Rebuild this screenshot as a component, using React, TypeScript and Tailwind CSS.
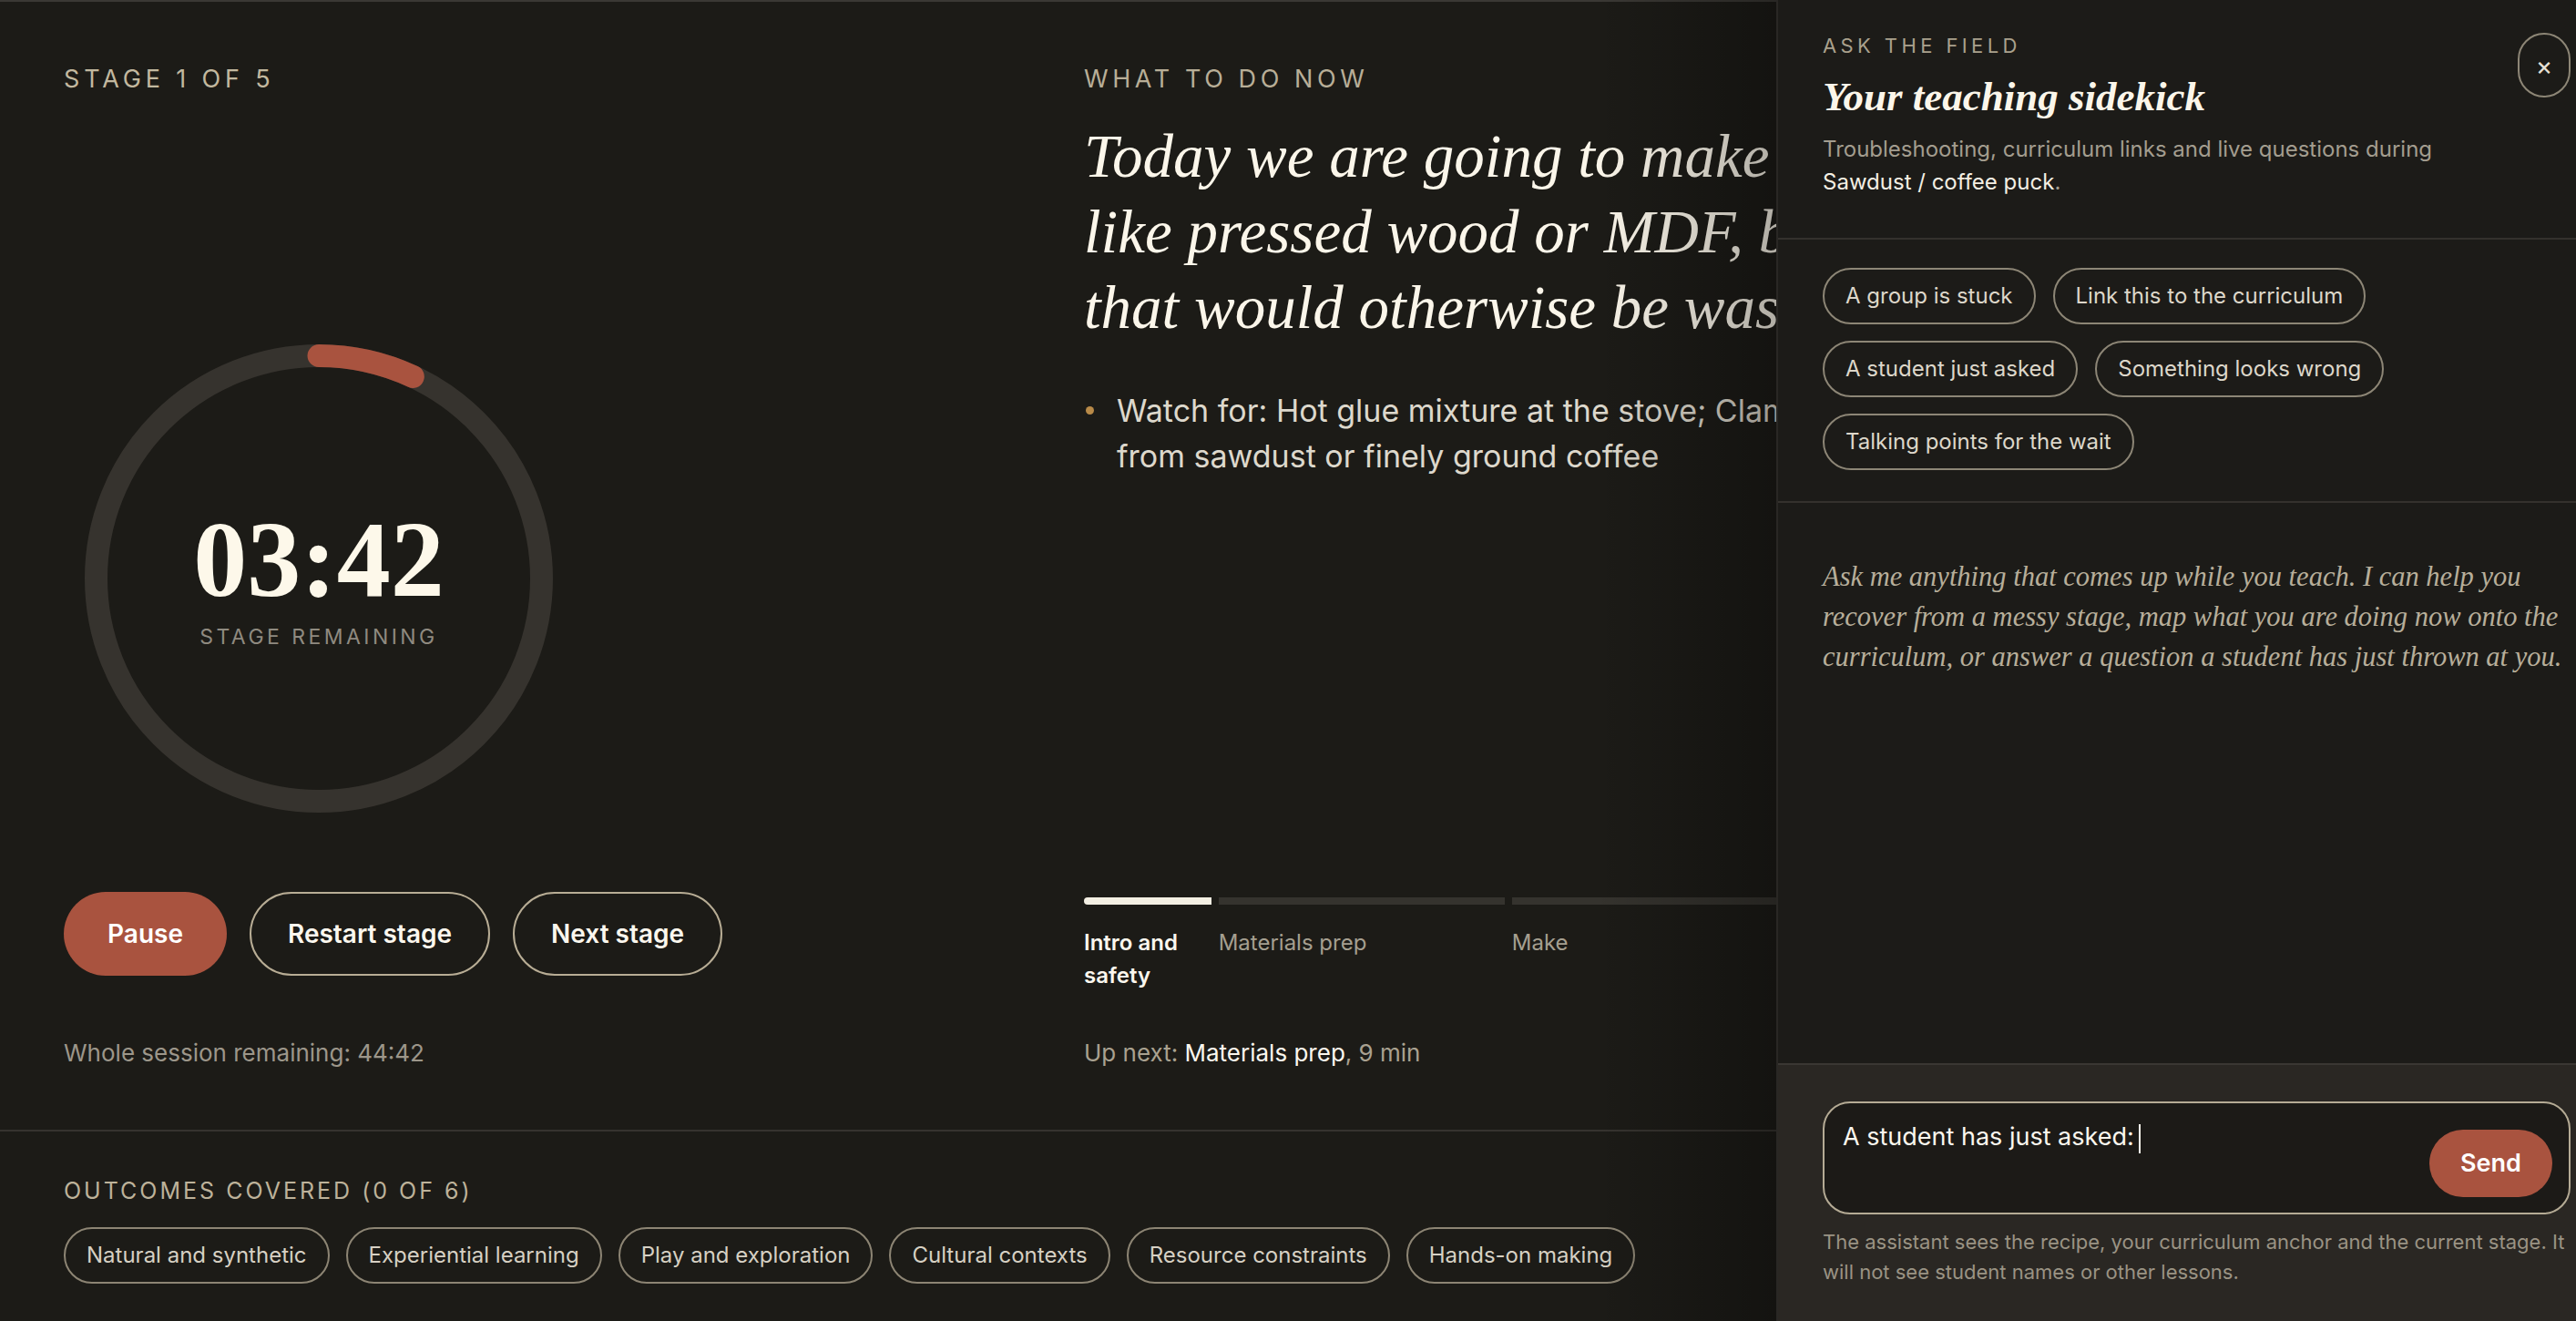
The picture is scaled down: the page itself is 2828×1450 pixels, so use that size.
import React from 'react';

interface Stage {
  name: string;
  minutes: number;
}

const stages: Stage[] = [
  { name: 'Intro and safety', minutes: 4 },
  { name: 'Materials prep', minutes: 9 },
  { name: 'Make', minutes: 16 },
  { name: 'Press and dry', minutes: 9 },
  { name: 'Reflect', minutes: 6 },
];

const outcomes = [
  'Natural and synthetic',
  'Experiential learning',
  'Play and exploration',
  'Cultural contexts',
  'Resource constraints',
  'Hands-on making',
];

const prompts = [
  'A group is stuck',
  'Link this to the curriculum',
  'A student just asked',
  'Something looks wrong',
  'Talking points for the wait',
];

function TimerRing() {
  return (
    <div className="mt-[248px] grid h-[560px] w-[560px] place-items-center">
      <svg className="[grid-area:1/1]" width="560" height="560" viewBox="0 0 560 560">
        <circle cx="280" cy="280" r="244.5" fill="none" stroke="#36332e" strokeWidth="25" />
        <path d="M 280 35.5 A 244.5 244.5 0 0 1 383.3 58.4" fill="none" stroke="#a9533f" strokeWidth="25" strokeLinecap="round" />
      </svg>
      <div className="flex flex-col items-center [grid-area:1/1]">
        <span className="font-['Liberation_Serif',serif] text-[118px] font-bold leading-none text-[#fdf8ea]">03:42</span>
        <span className="mt-[9px] text-[23px] leading-[32px] tracking-[0.15em] text-[#8f8a80]">STAGE REMAINING</span>
      </div>
    </div>
  );
}

export default function App() {
  return (
    <div className="relative h-[1450px] w-full overflow-hidden bg-[#1c1b17] font-['Inter',sans-serif] text-[#ebe6da]">
      <main className="flex h-full flex-col border-t-2 border-[#3a3834]">
        <section className="grid grid-cols-[1008px_1fr] gap-x-[112px] border-b-2 border-[#36332f] px-[70px] pb-[64px] pt-[65px]">
          {/* Timer column */}
          <div className="flex flex-col">
            <p className="text-[27px] leading-[40px] tracking-[0.18em] text-[#c2b89f]">STAGE 1 OF 5</p>
            <TimerRing />
            <div className="mt-[64px] flex gap-[25px]">
              <button className="h-[92px] rounded-full bg-[#a9533f] px-[48px] text-[28px] font-semibold text-white">Pause</button>
              <button className="h-[92px] rounded-full border-2 border-[#b8ad95] px-[40px] text-[28px] font-semibold text-[#fbf7ee]">Restart stage</button>
              <button className="h-[92px] rounded-full border-2 border-[#b8ad95] px-[40px] text-[28px] font-semibold text-[#fbf7ee]">Next stage</button>
            </div>
            <p className="mt-[65px] text-[26px] leading-[40px] text-[#9c968a]">Whole session remaining: 44:42</p>
          </div>

          {/* Instructions column */}
          <div className="flex flex-col">
            <p className="text-[27px] leading-[40px] tracking-[0.17em] text-[#b8ae97]">WHAT TO DO NOW</p>
            <h1 className="mt-[23px] whitespace-nowrap font-['Liberation_Serif',serif] text-[67px] italic leading-[83px] text-[#fbf6ea]">
              Today we are going to make a small solid puck, a little bit
              <br />
              like pressed wood or MDF, but built from material
              <br />
              that would otherwise be wasted.
            </h1>
            <ul className="mt-[47px]">
              <li className="flex items-start">
                <span className="ml-[2px] mt-[20px] h-[9px] w-[9px] shrink-0 rounded-full bg-[#b88a48]"></span>
                <span className="ml-[25px] whitespace-nowrap text-[34px] leading-[50px] text-[#ddd8cc]">
                  Watch for: Hot glue mixture at the stove; Clamp pressure while pucks set; Fine dust
                  <br />
                  from sawdust or finely ground coffee
                </span>
              </li>
            </ul>

            <div className="mt-auto flex gap-[8px]">
              {stages.map((s, i) => (
                <div key={s.name} className="flex min-w-0 flex-col" style={{ flexGrow: s.minutes, flexBasis: 0 }}>
                  <div className={i === 0 ? 'h-[8px] rounded-l-full bg-[#f3efe3]' : 'h-[8px] bg-[#35332e]'}></div>
                  <p
                    className={
                      i === 0
                        ? 'mt-[24px] text-[24px] font-semibold leading-[36px] text-[#fbf7ee]'
                        : 'mt-[24px] text-[24px] leading-[36px] text-[#a59f90]'
                    }
                  >
                    {s.name}
                  </p>
                </div>
              ))}
            </div>
            <p className="mt-[47px] text-[26px] leading-[40px] text-[#a9a190]">
              Up next: <span className="text-[#fbf7ee]">Materials prep</span>, 9 min
            </p>
          </div>
        </section>

        {/* Outcomes */}
        <section className="px-[70px] pt-[45px]">
          <p className="text-[25px] leading-[40px] tracking-[0.12em] text-[#bdb29a]">OUTCOMES COVERED (0 OF 6)</p>
          <div className="mt-[20px] flex gap-[18px]">
            {outcomes.map((o) => (
              <span key={o} className="flex h-[62px] items-center rounded-full border-2 border-[#8d8574] px-[23px] text-[24px] text-[#d6d0c3]">
                {o}
              </span>
            ))}
          </div>
        </section>
      </main>

      {/* Assistant drawer */}
      <aside className="absolute right-0 top-0 flex h-full w-[878px] flex-col border-l-2 border-[#3a3733] bg-[#1c1b18]">
        <div className="pointer-events-none absolute right-full top-0 h-full w-[200px] bg-gradient-to-l from-black/30 to-transparent"></div>

        <header className="flex items-start justify-between border-b-2 border-[#34312d] pb-[43px] pl-[49px] pr-[6px] pt-[34px]">
          <div>
            <p className="text-[22px] leading-[32px] tracking-[0.2em] text-[#aaa18d]">ASK THE FIELD</p>
            <h2 className="mt-[12px] font-['Liberation_Serif',serif] text-[45px] font-semibold italic leading-[56px] text-[#fbf6ea]">
              Your teaching sidekick
            </h2>
            <p className="mt-[12px] text-[24px] leading-[36px] text-[#a39d8f]">
              Troubleshooting, curriculum links and live questions during
              <br />
              <span className="text-[#f4efe3]">Sawdust / coffee puck</span>.
            </p>
          </div>
          <button className="mt-[2px] flex h-[71px] w-[58px] items-center justify-center rounded-full border-2 border-[#8d8676] text-[28px] text-[#e6e1d5]">
            ×
          </button>
        </header>

        <div className="flex flex-wrap gap-x-[19px] gap-y-[18px] border-b-2 border-[#34312d] pb-[34px] pl-[49px] pr-[6px] pt-[31px]">
          {prompts.map((p) => (
            <button key={p} className="flex h-[62px] items-center rounded-full border-2 border-[#8d8676] px-[23px] text-[24px] text-[#ddd7ca]">
              {p}
            </button>
          ))}
        </div>

        <div className="flex-1 pl-[49px] pr-[6px] pt-[59px]">
          <p className="whitespace-nowrap font-['Liberation_Serif',serif] text-[30.5px] italic leading-[44px] text-[#b7ae9a]">
            Ask me anything that comes up while you teach. I can help you
            <br />
            recover from a messy stage, map what you are doing now onto the
            <br />
            curriculum, or answer a question a student has just thrown at you.
          </p>
        </div>

        <div className="border-t-2 border-[#3a3733] bg-[#2a2723] pb-[37px] pl-[49px] pr-[6px] pt-[40px]">
          <div className="flex h-[124px] rounded-[30px] border-2 border-[#b5ab95] bg-[#1c1a17] pb-[17px] pl-[20px] pr-[18px] pt-[18px]">
            <p className="flex-1 text-[27px] leading-[38px] text-[#fbf7ee]">
              A student has just asked:
              <span className="ml-[5px] inline-block h-[32px] w-[2px] bg-[#fbf7ee] align-middle"></span>
            </p>
            <button className="h-[74px] w-[135px] self-end rounded-full bg-[#a9533f] text-[27px] font-semibold text-white">Send</button>
          </div>
          <p className="mt-[14px] text-[22px] leading-[33px] text-[#9a9384]">
            The assistant sees the recipe, your curriculum anchor and the current stage. It
            <br />
            will not see student names or other lessons.
          </p>
        </div>
      </aside>
    </div>
  );
}
